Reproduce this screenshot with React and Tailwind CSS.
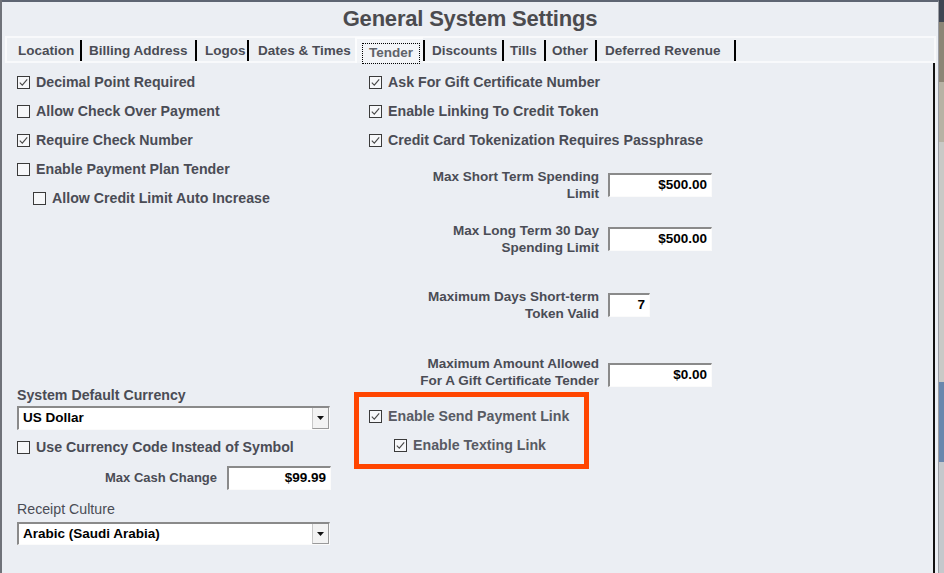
import React from "react";

const FONT = "font-['Liberation_Sans',Arial,sans-serif]";

function Box({ checked }) {
  return (
    <span className="w-[13px] h-[13px] border border-[#3a3a3a] bg-[#f6f7f9] flex items-center justify-center shrink-0">
      {checked && (
        <svg width="11" height="11" viewBox="0 0 11 11">
          <path d="M1.8 5.6 L4.3 8.2 L9.2 2.3" fill="none" stroke="#474747" strokeWidth="1.1" />
        </svg>
      )}
    </span>
  );
}

function CheckRow({ checked, label, indent = "", color = "text-[#4a4c55]" }) {
  return (
    <div className={`h-[29px] flex items-center gap-[6px] ${indent}`}>
      <Box checked={checked} />
      <span className={`text-[14.2px] font-bold ${color} whitespace-nowrap`}>{label}</span>
    </div>
  );
}

function Input({ value, w }) {
  return (
    <div
      className={`${w} h-[24px] bg-white border-t-2 border-l-2 border-r border-b border-t-[#8a8a8a] border-l-[#8a8a8a] border-r-[#fbfbfb] border-b-[#fbfbfb] flex items-center justify-end pr-[4px] text-[13.5px] font-bold text-black shrink-0`}
    >
      {value}
    </div>
  );
}

function Select({ value, h }) {
  return (
    <div
      className={`w-[313px] ${h} bg-white border-t-2 border-l-2 border-r border-b border-t-[#8a8a8a] border-l-[#8a8a8a] border-r-[#fbfbfb] border-b-[#fbfbfb] flex items-center justify-between`}
    >
      <span className="pl-[4px] text-[13.5px] font-bold text-black">{value}</span>
      <span className="w-[17px] h-full bg-[#f3f3f3] border-l border-[#c8c8c8] border-r border-r-[#9a9a9a] border-b border-b-[#9a9a9a] flex items-center justify-center">
        <svg width="7" height="4" viewBox="0 0 7 4">
          <path d="M0 0 L7 0 L3.5 4 Z" fill="#111" />
        </svg>
      </span>
    </div>
  );
}

function LabelGroup({ lines, value, w = "w-[104px]", mt, lift = "" }) {
  return (
    <div className={`flex items-center h-[34px] ${mt}`}>
      <div className={`w-[244px] text-right text-[13.5px] font-bold leading-[17px] text-[#4a4c55] ${lift}`}>
        {lines.map((l, i) => (
          <div key={i}>{l}</div>
        ))}
      </div>
      <div className="ml-[9px]">
        <Input value={value} w={w} />
      </div>
    </div>
  );
}

const tabs = [
  { label: "Location", cls: "w-[75px] pl-[11px] border-r-2" },
  { label: "Billing Address", cls: "w-[115px] pl-[7px] border-r-2" },
  { label: "Logos", cls: "w-[52px] pl-[8px] border-r-2" },
  { label: "Dates & Times", cls: "w-[106px] pl-[9px]" },
];
const tabs2 = [
  { label: "Discounts", cls: "w-[81px] pl-[7px] border-l-2 border-r-2" },
  { label: "Tills", cls: "w-[42px] pl-[6px] border-r-2" },
  { label: "Other", cls: "w-[51px] pl-[6px] border-r-2" },
  { label: "Deferred Revenue", cls: "w-[139px] pl-[8px] border-r-2" },
];

function Tab({ t }) {
  return (
    <div className={`${t.cls} h-[21px] pt-[2px] border-black flex items-center text-[13.5px] font-bold text-[#4a4c55] whitespace-nowrap shrink-0`}>
      {t.label}
    </div>
  );
}

export default function App() {
  return (
    <div className={`${FONT} w-[944px] h-[573px] overflow-hidden flex bg-[#ebeef3]`}>
      {/* left edge */}
      <div className="w-[2px] h-full bg-[#6f7279] shrink-0" />
      {/* window */}
      <div className="w-[937px] h-full flex flex-col border-t-2 border-t-[#5e6572] border-r border-r-[#9a9da3] bg-[#ebeef3] shrink-0">
        <div className="h-[34px] flex items-center justify-center pb-[1px]">
          <span className="text-[22px] font-bold text-[#4b4b4f] tracking-[-0.2px]">General System Settings</span>
        </div>
        {/* tab strip */}
        <div className="ml-[3px] w-[931px] h-[27px] border-2 border-[#f8f9fb] bg-[#edf0f4] flex items-end">
          {tabs.map((t) => (
            <Tab key={t.label} t={t} />
          ))}
          <div className="w-[68px] h-[26px] bg-[#f2f4f7] border-t-2 border-l-2 border-[#fbfcfd] shrink-0 -mb-[2px]">
            <div className="ml-[5px] mt-[4px] w-[58px] h-[21px] border border-dotted border-black flex items-center justify-center text-[13.5px] font-bold text-[#606369]">
              Tender
            </div>
          </div>
          {tabs2.map((t) => (
            <Tab key={t.label} t={t} />
          ))}
        </div>
        {/* body */}
        <div className="ml-[3px] w-[930px] flex-1 border-r-2 border-r-[#111] flex pt-[5px]">
          {/* left column */}
          <div className="w-[350px] pl-[12px] flex flex-col shrink-0">
            <CheckRow checked label="Decimal Point Required" />
            <CheckRow label="Allow Check Over Payment" />
            <CheckRow checked label="Require Check Number" />
            <CheckRow label="Enable Payment Plan Tender" />
            <CheckRow label="Allow Credit Limit Auto Increase" indent="pl-[16px]" />
            <div className="mt-[173px] h-[18px] leading-[18px] text-[14.2px] font-bold text-[#4a4c55]">System Default Currency</div>
            <div className="mt-[2px]">
              <Select value="US Dollar" h="h-[24px]" />
            </div>
            <div className="mt-[3px]">
              <CheckRow label="Use Currency Code Instead of Symbol" />
            </div>
            <div className="mt-[4px] flex items-center">
              <div className="w-[200px] text-right text-[13px] font-bold text-[#4a4c55]">Max Cash Change</div>
              <div className="ml-[10px]">
                <Input value="$99.99" w="w-[104px]" />
              </div>
            </div>
            <div className="mt-[10px] h-[18px] leading-[18px] text-[14.2px] text-[#4a4c55]">Receipt Culture</div>
            <div className="mt-[4px]">
              <Select value="Arabic (Saudi Arabia)" h="h-[23px]" />
            </div>
          </div>
          {/* right column */}
          <div className="flex flex-col shrink-0">
            <div className="pl-[14px]">
              <CheckRow checked label="Ask For Gift Certificate Number" />
              <CheckRow checked label="Enable Linking To Credit Token" />
              <CheckRow checked label="Credit Card Tokenization Requires Passphrase" />
            </div>
            <LabelGroup mt="mt-[13px]" lines={["Max Short Term Spending", "Limit"]} value="$500.00" />
            <LabelGroup mt="mt-[20px]" lines={["Max Long Term 30 Day", "Spending Limit"]} value="$500.00" />
            <LabelGroup mt="mt-[32px]" lines={["Maximum Days Short-term", "Token Valid"]} value="7" w="w-[42px]" />
            <LabelGroup mt="mt-[36px]" lines={["Maximum Amount Allowed", "For A Gift Certificate Tender"]} value="$0.00" lift="mb-[7px]" />
            <div className="mt-0 -ml-[1px] w-[235px] h-[77px] border-[5px] border-[#ff4500] pt-[5px] pl-[10px]">
              <CheckRow checked label="Enable Send Payment Link" color="text-[#585b64]" />
              <CheckRow checked label="Enable Texting Link" indent="pl-[25px]" color="text-[#585b64]" />
            </div>
          </div>
        </div>
      </div>
      {/* right desktop strip */}
      <div className="w-[5px] h-full flex flex-col shrink-0">
        <div className="h-[22px] bg-[#3f4653]" />
        <div className="h-[60px] bg-[#8c8576]" />
        <div className="h-[60px] bg-[#b7b2a4]" />
        <div className="h-[240px] bg-[#c9c9c6]" />
        <div className="h-[80px] bg-[#6a87ad]" />
        <div className="flex-1 bg-[#c5c8cc]" />
      </div>
    </div>
  );
}
